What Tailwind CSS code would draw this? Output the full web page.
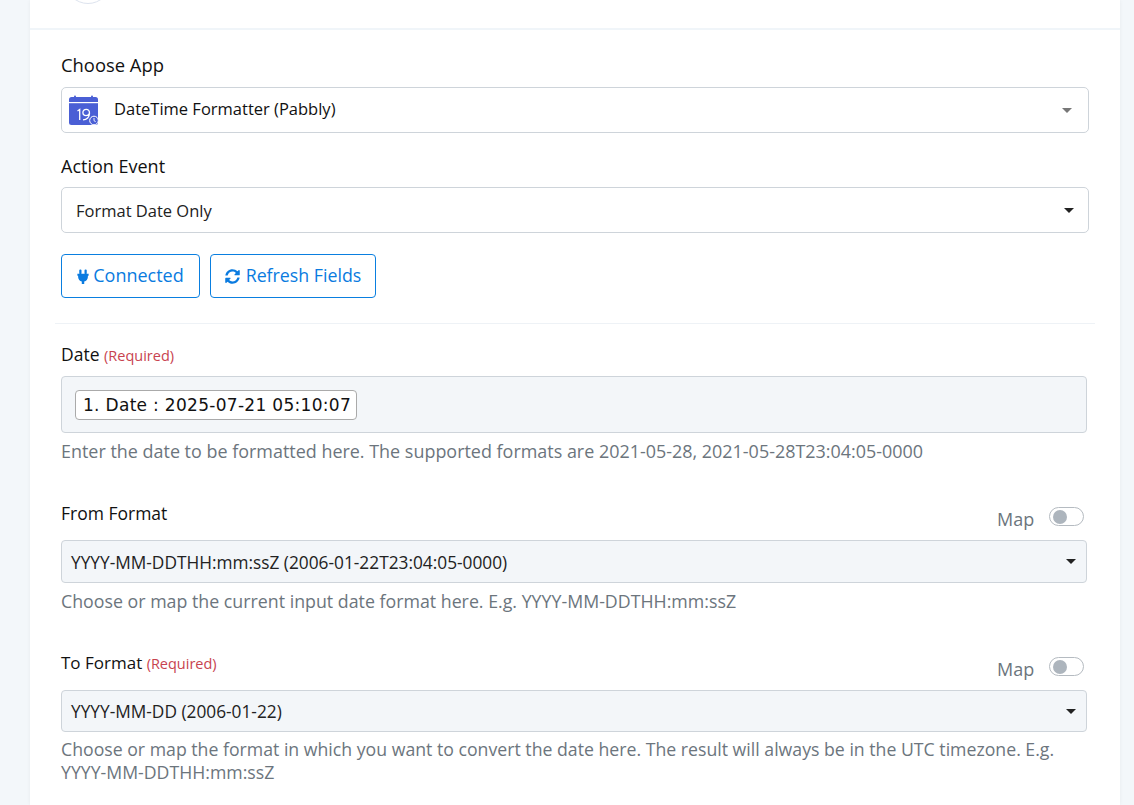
<!DOCTYPE html>
<html lang="en">
<head>
    <meta charset="UTF-8">
    <meta name="viewport" content="width=device-width, initial-scale=1.0">
    <title>DateTime Formatter</title>
    <script src="https://cdn.jsdelivr.net/npm/@tailwindcss/browser@4"></script>
</head>
<body class="bg-[#f3f7fa] h-[805px] overflow-hidden font-['Open_Sans',sans-serif]">
    <div class="ml-[30px] w-[1090px] h-[805px] bg-white overflow-hidden shadow-[0_0_4px_rgba(0,0,0,0.05)]">
        <!-- top of the previous step, cut off by the viewport -->
        <div class="h-[30px] border-b-2 border-[#f0f5f9] overflow-hidden">
            <div class="ml-[35px] -mt-[42px] w-[46px] h-[46px] rounded-full border border-[#dde3ee]"></div>
        </div>

        <div class="pt-[22px] px-[31px]">
            <!-- Choose App -->
            <label class="block h-[26px] text-[18.400px] leading-[26px] text-[#111]">Choose App</label>
            <div class="mt-[9px] h-[46px] w-[1028px] flex items-center border border-[#ced4da] rounded-[5px] pl-[7px] pr-[16px]">
                <svg class="w-[30px] h-[30px] shrink-0" viewBox="0 0 30 30">
                    <rect x="0" y="2" width="29" height="28" rx="2.5" fill="#4a5fd5"/>
                    <rect x="5" y="0.500" width="2" height="4" rx="1" fill="#4a5fd5"/>
                    <rect x="22" y="0.500" width="2" height="4" rx="1" fill="#4a5fd5"/>
                    <rect x="0" y="7" width="29" height="1.200" fill="#fff"/>
                    <path d="M8.500 16l2.200-1.500v10.500M14 24.800c3.800 0 6.500-2.800 6.500-6.500 0-2.500-1.300-3.900-3.300-3.900-2 0-3.300 1.300-3.300 3.100 0 1.800 1.300 3.100 3.200 3.100 1.400 0 2.700-.700 3.300-2" fill="none" stroke="#fff" stroke-width="1.300"/>
                    <circle cx="25" cy="25.500" r="4.300" fill="#4a5fd5" stroke="#fff" stroke-width="1"/>
                    <path d="M25 23v2.700l1.700 1" fill="none" stroke="#fff" stroke-width=".9"/>
                </svg>
                <span class="ml-[15px] text-[16.500px] leading-[24px] -mt-[3px] text-[#111] flex-1">DateTime Formatter (Pabbly)</span>
                <span class="w-0 h-0 border-x-[5px] border-x-transparent border-t-[5px] border-t-[#777]"></span>
            </div>

            <!-- Action Event -->
            <label class="block mt-[20px] h-[26px] text-[18px] leading-[26px] text-[#111]">Action Event</label>
            <div class="mt-[8px] h-[46px] w-[1028px] flex items-center border border-[#ced4da] rounded-[5px] pl-[14px] pr-[14px]">
                <span class="text-[16.500px] leading-[24px] mt-[1px] text-[#222] flex-1">Format Date Only</span>
                <span class="w-0 h-0 border-x-[5px] border-x-transparent border-t-[5px] border-t-[#222]"></span>
            </div>

            <!-- Buttons -->
            <div class="mt-[21px] flex gap-[10px]">
                <button class="h-[44px] w-[139px] pb-[2px] flex items-center justify-center gap-[4px] border border-[#0a7fe0] rounded-[4px] text-[#0a7be0] text-[18px]">
                    <svg class="w-[12px] h-[15px] mt-[2px]" viewBox="0 0 12 16" fill="#0a7be0">
                        <rect x="2" y="0.500" width="2.400" height="5" rx="1"/>
                        <rect x="7.600" y="0.500" width="2.400" height="5" rx="1"/>
                        <path d="M0 5h12v2.200h-.8v1.300c0 2.400-1.700 4.300-3.900 4.700V16H4.700v-2.800C2.500 12.800.8 10.900.8 8.500V7.200H0z"/>
                    </svg>
                    Connected
                </button>
                <button class="h-[44px] w-[166px] pb-[2px] flex items-center justify-center gap-[6px] border border-[#0a7fe0] rounded-[4px] text-[#0a7be0] text-[17.800px]">
                    <svg class="w-[15px] h-[15px] mt-[2px]" viewBox="0 0 512 512" fill="#0a7be0">
                        <path d="M370.720 133.280C339.458 104.008 298.888 87.962 255.848 88c-77.458.068-144.328 53.178-162.791 126.850-1.344 5.363-6.122 9.150-11.651 9.150H24.103c-7.498 0-13.194-6.807-11.807-14.176C33.933 94.924 134.813 8 256 8c66.448 0 126.791 26.136 171.315 68.685L463.030 40.970C478.149 25.851 504 36.559 504 57.941V192c0 13.255-10.745 24-24 24H345.941c-21.382 0-32.090-25.851-16.971-40.971l41.750-41.749zM32 296h134.059c21.382 0 32.090 25.851 16.971 40.971l-41.750 41.750c31.262 29.273 71.835 45.319 114.876 45.280 77.418-.070 144.315-53.144 162.787-126.849 1.344-5.363 6.122-9.150 11.651-9.150h57.304c7.498 0 13.194 6.807 11.807 14.176C478.067 417.076 377.187 504 256 504c-66.448 0-126.791-26.136-171.315-68.685L48.970 471.030C33.851 486.149 8 475.441 8 454.059V320c0-13.255 10.745-24 24-24z"/>
                    </svg>
                    Refresh Fields
                </button>
            </div>
        </div>

        <div class="mt-[25px] ml-[25px] w-[1040px] h-[1px] bg-[#eef2f6]"></div>

        <div class="pt-[18px] px-[31px]">
            <!-- Date -->
            <label class="block h-[24px] text-[17.500px] leading-[24px] text-[#111]">Date <span class="text-[14.500px] text-[#c8434f]">(Required)</span></label>
            <div class="mt-[10px] h-[57px] w-[1026px] flex items-start pt-[13px] pl-[13px] bg-[#f3f6f9] border border-[#ced4da] rounded-[4px]">
                <span class="h-[30px] w-[282px] leading-[28px] pl-[7px] whitespace-nowrap bg-white border border-[#aaa] rounded-[4px] text-[17px] tracking-[0.300px] text-[#111] font-['DejaVu_Sans',sans-serif]">1. Date : 2025-07-21 05:10:07</span>
            </div>
            <p class="mt-[6px] h-[24px] text-[17.950px] leading-[24px] text-[#6c757d]">Enter the date to be formatted here. The supported formats are 2021-05-28, 2021-05-28T23:04:05-0000</p>

            <!-- From Format -->
            <div class="mt-[34px] h-[43px] flex justify-between">
                <label class="block mt-[4px] text-[17.500px] leading-[24px] text-[#111] h-[24px]">From Format</label>
                <div class="flex items-start mr-[5px] w-[87px]">
                    <span class="mt-[10px] text-[18px] leading-[24px] text-[#6c757d]">Map</span>
                    <span class="ml-auto mt-[10px] w-[35px] h-[19px] rounded-full border border-[#b5bbc1] bg-white flex items-center pl-[3px]">
                        <span class="w-[14px] h-[14px] rounded-full bg-[#adb5bd]"></span>
                    </span>
                </div>
            </div>
            <div class="h-[43px] w-[1026px] flex items-center bg-[#f3f6f9] border border-[#ced4da] rounded-[4px] pl-[9px] pr-[10px]">
                <span class="text-[17.300px] leading-[24px] mt-[3px] text-[#222] flex-1">YYYY-MM-DDTHH:mm:ssZ (2006-01-22T23:04:05-0000)</span>
                <span class="w-0 h-0 border-x-[5px] border-x-transparent border-t-[5px] border-t-[#222]"></span>
            </div>
            <p class="mt-[6px] h-[24px] text-[17.800px] leading-[24px] text-[#6c757d]">Choose or map the current input date format here. E.g. YYYY-MM-DDTHH:mm:ssZ</p>

            <!-- To Format -->
            <div class="mt-[34px] h-[43px] flex justify-between">
                <label class="block mt-[4px] text-[17px] leading-[24px] text-[#111] h-[24px]">To Format <span class="text-[14.500px] text-[#c8434f]">(Required)</span></label>
                <div class="flex items-start mr-[5px] w-[87px]">
                    <span class="mt-[10px] text-[18px] leading-[24px] text-[#6c757d]">Map</span>
                    <span class="ml-auto mt-[10px] w-[35px] h-[19px] rounded-full border border-[#b5bbc1] bg-white flex items-center pl-[3px]">
                        <span class="w-[14px] h-[14px] rounded-full bg-[#adb5bd]"></span>
                    </span>
                </div>
            </div>
            <div class="h-[42px] w-[1026px] flex items-center bg-[#f3f6f9] border border-[#ced4da] rounded-[4px] pl-[9px] pr-[10px]">
                <span class="text-[17.300px] leading-[24px] mt-[2px] text-[#222] flex-1">YYYY-MM-DD (2006-01-22)</span>
                <span class="w-0 h-0 border-x-[5px] border-x-transparent border-t-[5px] border-t-[#222]"></span>
            </div>
            <p class="mt-[6px] w-[1026px] text-[17.700px] leading-[23px] text-[#6c757d]">Choose or map the format in which you want to convert the date here. The result will always be in the UTC timezone. E.g. YYYY-MM-DDTHH:mm:ssZ</p>
        </div>
    </div>
</body>
</html>
